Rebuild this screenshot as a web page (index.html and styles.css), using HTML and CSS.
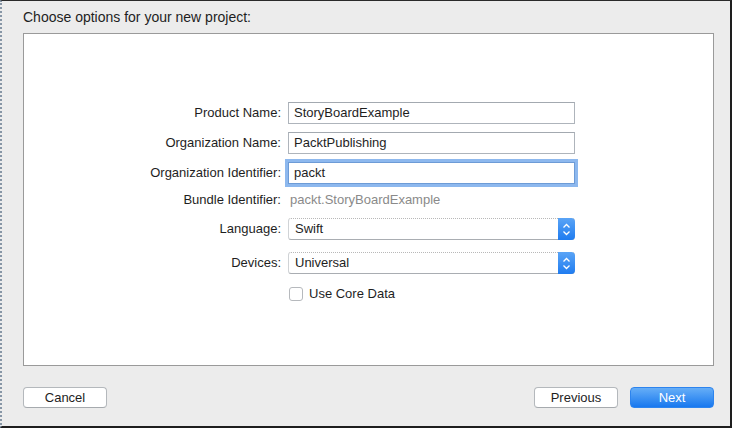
FILE: index.html
```html
<!DOCTYPE html>
<html>
<head>
<meta charset="utf-8">
<link rel="stylesheet" href="styles.css">
</head>
<body>
<div class="window">
  <div class="title">Choose options for your new project:</div>
  <div class="panel">
    <div class="row r1">
      <div class="label">Product Name:</div>
      <div class="field"><span>StoryBoardExample</span></div>
    </div>
    <div class="row r2">
      <div class="label">Organization Name:</div>
      <div class="field"><span>PacktPublishing</span></div>
    </div>
    <div class="row r3">
      <div class="label">Organization Identifier:</div>
      <div class="field focus"><span>packt</span></div>
    </div>
    <div class="row small r4">
      <div class="label">Bundle Identifier:</div>
      <div class="static">packt.StoryBoardExample</div>
    </div>
    <div class="row r5">
      <div class="label">Language:</div>
      <div class="popup"><span>Swift</span>
        <div class="arrows"><svg width="17" height="21" viewBox="0 0 17 21"><path d="M5.5 8.5 L8.5 5.5 L11.5 8.5 M5.5 12.5 L8.5 15.5 L11.5 12.5" fill="none" stroke="#fff" stroke-width="1.3"/></svg></div>
      </div>
    </div>
    <div class="row r6">
      <div class="label">Devices:</div>
      <div class="popup"><span>Universal</span>
        <div class="arrows"><svg width="17" height="21" viewBox="0 0 17 21"><path d="M5.5 8.5 L8.5 5.5 L11.5 8.5 M5.5 12.5 L8.5 15.5 L11.5 12.5" fill="none" stroke="#fff" stroke-width="1.3"/></svg></div>
      </div>
    </div>
    <div class="row small r7">
      <div class="label"></div>
      <div class="check"><span class="box"></span><span>Use Core Data</span></div>
    </div>
  </div>
  <div class="footer">
    <div class="btn">Cancel</div>
    <div class="right">
      <div class="btn">Previous</div>
      <div class="btn primary">Next</div>
    </div>
  </div>
</div>
</body>
</html>
```

FILE: styles.css
```css
* { box-sizing: border-box; }
html, body { margin: 0; padding: 0; }
body {
  font-family: "Liberation Sans", Arial, sans-serif;
  font-size: 13px;
  color: #1e1e1e;
  background: #ececec;
}
.window {
  width: 732px;
  height: 428px;
  background: #ececec;
  border-top: 1px solid #2a2a2a;
  border-right: 2px solid #1e1e1e;
  border-bottom: 2px solid #1e1e1e;
  border-left: 2px dotted #8796a6;
  padding: 8px 16px 0 21px;
  display: flex;
  flex-direction: column;
}
.title {
  font-size: 14px;
  line-height: 16px;
  height: 16px;
  margin-bottom: 8px;
}
.panel {
  width: 691px;
  height: 333px;
  background: #fff;
  border: 1px solid #9a9a9a;
  padding-top: 68px;
  display: flex;
  flex-direction: column;
}
.row {
  display: flex;
  gap: 7px;
  height: 22px;
}
.row.small { height: 16px; }
.r2, .r3, .r4 { margin-top: 8px; }
.r5 { margin-top: 10px; }
.r6, .r7 { margin-top: 12px; }
.label {
  width: 257px;
  text-align: right;
  line-height: 22px;
  white-space: nowrap;
}
.small .label { line-height: 16px; }
.field, .popup, .static, .check { width: 287px; }
.field {
  border: 1px solid #aeb4bb;
  border-top-color: #a3a9b0;
  background: #fff;
  padding-left: 5px;
  line-height: 20px;
}
.field.focus {
  box-shadow: 0 0 0 3px #8db8ee;
  border-color: #6d9bd6;
}
.static {
  color: #8a8a8a;
  line-height: 16px;
  padding-left: 2px;
}
.popup {
  position: relative;
  border: 1px solid #d0d3d6;
  border-top: 1px dotted #b8b8b8;
  border-bottom: 1px solid #a9adb2;
  border-radius: 3px;
  background: #fff;
  padding-left: 6px;
  line-height: 20px;
}
.arrows {
  position: absolute;
  right: -1px;
  top: -1px;
  width: 17px;
  height: 22px;
  background: linear-gradient(#5aa4f6, #1f7cf0);
  border-radius: 0 4px 4px 0;
  display: flex;
  align-items: center;
  justify-content: center;
}
.arrows svg { display: block; }
.check {
  display: flex;
  align-items: center;
  gap: 6px;
  padding-left: 1px;
  line-height: 16px;
}
.check .box {
  width: 14px;
  height: 14px;
  border: 1px solid #b6b9bd;
  border-radius: 3px;
  background: #fff;
}
.footer {
  margin-top: 21px;
  display: flex;
  justify-content: space-between;
  width: 691px;
}
.right { display: flex; gap: 12px; }
.btn {
  width: 84px;
  height: 21px;
  border: 1px solid #b4b8bc;
  border-bottom-color: #a6aaae;
  border-radius: 4px;
  background: #fff;
  text-align: center;
  line-height: 19px;
  font-size: 13px;
}
.btn.primary {
  background: linear-gradient(#66aef7, #1878ef);
  border-color: #2d84ee;
  color: #fff;
}
```
